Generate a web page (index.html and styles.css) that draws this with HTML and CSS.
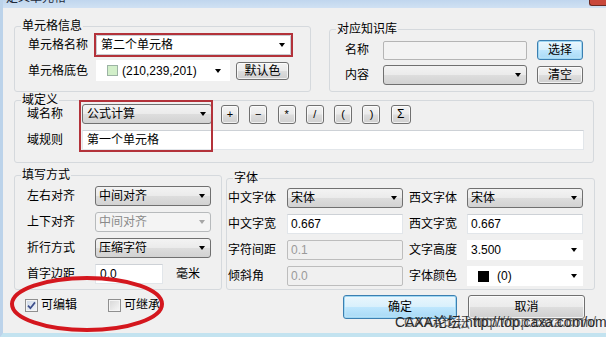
FILE: index.html
```html
<!DOCTYPE html>
<html lang="zh-CN">
<head>
    <meta charset="UTF-8">
    <meta name="viewport" content="width=device-width, initial-scale=1.0">
    <title>定义单元格</title>
    <link rel="stylesheet" href="styles.css">
</head>
<body>
    <div class="dialog">
        <div class="titlebar">
            <span class="title">定义单元格</span>
            <span class="close"></span>
        </div>

        <div class="client">
            <div class="top-row">
                <div class="group g-cell">
                    <div class="group-title">单元格信息</div>
                    <div class="row r-name">
                        <span class="label">单元格名称</span>
                        <div class="combo edit w-name">第二个单元格<i class="arrow"></i></div>
                    </div>
                    <div class="row r-color">
                        <span class="label">单元格底色</span>
                        <div class="combo flat w-color"><i class="swatch"></i>(210,239,201)<i class="arrow"></i></div>
                        <button class="btn b-defcolor">默认色</button>
                    </div>
                </div>

                <div class="group g-kb">
                    <div class="group-title">对应知识库</div>
                    <div class="rows">
                        <div class="row">
                            <span class="label">名称</span>
                            <div class="input kb"></div>
                            <button class="btn default b-side">选择</button>
                        </div>
                        <div class="row">
                            <span class="label">内容</span>
                            <div class="combo kb"><i class="arrow"></i></div>
                            <button class="btn b-side b-clear">清空</button>
                        </div>
                    </div>
                </div>
            </div>

            <div class="group g-field">
                <div class="group-title">域定义</div>
                <div class="rows">
                    <div class="row">
                        <span class="label">域名称</span>
                        <div class="combo w-formula">公式计算<i class="arrow"></i></div>
                        <div class="ops">
                            <button class="btn op">+</button>
                            <button class="btn op">−</button>
                            <button class="btn op">*</button>
                            <button class="btn op">/</button>
                            <button class="btn op">(</button>
                            <button class="btn op">)</button>
                            <button class="btn op sigma">Σ</button>
                        </div>
                    </div>
                    <div class="row">
                        <span class="label">域规则</span>
                        <div class="input w-rule">第一个单元格</div>
                    </div>
                </div>
            </div>

            <div class="mid-row">
                <div class="group g-fill">
                    <div class="group-title">填写方式</div>
                    <div class="rows">
                        <div class="row">
                            <span class="label">左右对齐</span>
                            <div class="combo w-align">中间对齐<i class="arrow"></i></div>
                        </div>
                        <div class="row">
                            <span class="label">上下对齐</span>
                            <div class="combo disabled w-align">中间对齐<i class="arrow"></i></div>
                        </div>
                        <div class="row">
                            <span class="label">折行方式</span>
                            <div class="combo w-align">压缩字符<i class="arrow"></i></div>
                        </div>
                        <div class="row r-margin">
                            <span class="label">首字边距</span>
                            <div class="input w-margin">0.0</div>
                            <span class="unit">毫米</span>
                        </div>
                    </div>
                </div>

                <div class="group g-font">
                    <div class="group-title">字体</div>
                    <div class="rows">
                        <div class="row">
                            <span class="label">中文字体</span>
                            <div class="combo w-font">宋体<i class="arrow"></i></div>
                            <span class="label label2">西文字体</span>
                            <div class="combo w-font">宋体<i class="arrow"></i></div>
                        </div>
                        <div class="row">
                            <span class="label">中文字宽</span>
                            <div class="input w-font">0.667</div>
                            <span class="label label2">西文字宽</span>
                            <div class="input w-font">0.667</div>
                        </div>
                        <div class="row">
                            <span class="label">字符间距</span>
                            <div class="input disabled w-font">0.1</div>
                            <span class="label label2">文字高度</span>
                            <div class="combo flat w-font">3.500<i class="arrow"></i></div>
                        </div>
                        <div class="row">
                            <span class="label">倾斜角</span>
                            <div class="input disabled w-font">0.0</div>
                            <span class="label label2">字体颜色</span>
                            <div class="combo flat w-font"><i class="swatch black"></i>(0)<i class="arrow"></i></div>
                        </div>
                    </div>
                </div>
            </div>

            <div class="footer">
                <div class="checks">
                    <label class="check-item">
                        <span class="cbox checked">
                            <svg width="9" height="9" viewBox="0 0 9 9"><path d="M1 4.6 L3.4 7.2 L8 1.4" fill="none" stroke="#3e4f8c" stroke-width="1.7"/></svg>
                        </span>
                        可编辑
                    </label>
                    <label class="check-item second">
                        <span class="cbox"></span>
                        可继承
                    </label>
                </div>
                <button class="btn default btn-ok">确定</button>
                <button class="btn btn-cancel">取消</button>
            </div>

            <!-- red annotations drawn over the dialog -->
            <div class="mark mark-name"></div>
            <div class="mark mark-field"></div>
            <svg class="ring" width="160" height="60" viewBox="0 0 160 60">
                <ellipse cx="80" cy="30" rx="75" ry="26" fill="none" stroke="#d4171e" stroke-width="4"/>
            </svg>
            <div class="watermark">
                <span>CAXA论坛:http://top.caxa.com/om</span>
                <span class="shift">CAXA论坛 http://top.caxa.com/</span>
            </div>
        </div>
    </div>
</body>
</html>
```

FILE: styles.css
```css
* {
    box-sizing: border-box;
}
body {
    margin: 0;
    width: 606px;
    height: 337px;
    overflow: hidden;
    font-family: "Liberation Sans", "Noto Sans CJK SC", sans-serif;
    font-size: 12px;
    line-height: 14px;
    color: #000;
    background: #c9ddf1;
}
.dialog {
    border-left: 3px solid #bcd3ea;
    border-bottom: 4px solid #c3e3f0;
}
.titlebar {
    height: 8px;
    display: flex;
    overflow: hidden;
    background: linear-gradient(#c0d6ee, #d0e1f3);
}
.title {
    margin-top: -9px;
    padding-left: 3px;
    color: #1e2a3a;
}
.close {
    margin-left: auto;
    width: 17px;
    height: 6px;
    background: #c9483b;
    border: 1px solid #6a2a22;
    border-top: none;
    border-right: none;
    border-radius: 0 0 0 3px;
}
.client {
    position: relative;
    height: 325px;
    background: #f0f0f0;
    padding-top: 18px;
}

/* group boxes */
.group {
    border: 1px solid #d5d9dd;
    border-radius: 3px;
}
.group-title {
    display: table;
    margin: -8px 0 0 6px;
    padding: 0 1px;
    background: #f0f0f0;
}
.row {
    display: flex;
    align-items: center;
    white-space: nowrap;
}
.label {
    flex: none;
}

/* controls */
.combo {
    display: flex;
    align-items: center;
    height: 20px;
    padding-left: 4px;
    border: 1px solid #707070;
    border-radius: 3px;
    background: linear-gradient(#f3f3f3 0%, #ebebeb 48%, #dddddd 52%, #d2d2d2 100%);
    white-space: nowrap;
}
.combo.edit {
    background: #fff;
    border-color: #c9ccd2;
    border-radius: 1px;
}
.combo.flat {
    background: #fff;
    border-color: #fff;
    border-radius: 0;
}
.combo.disabled {
    background: #f4f4f4;
    border-color: #b7babc;
    color: #8a8a8a;
}
.arrow {
    margin-left: auto;
    margin-right: 5px;
    width: 0;
    height: 0;
    border-left: 3.5px solid transparent;
    border-right: 3.5px solid transparent;
    border-top: 4px solid #000;
}
.combo.disabled .arrow {
    border-top-color: #a6a6a6;
}
.input {
    display: flex;
    align-items: center;
    height: 20px;
    padding-left: 4px;
    background: #fff;
    border: 1px solid #e2e6ea;
    border-top-color: #cdd1d6;
    white-space: nowrap;
}
.input.disabled {
    background: #f0f0f0;
    border: 1px solid #bdbdbd;
    border-radius: 2px;
    color: #9a9a9a;
}
.swatch {
    width: 11px;
    height: 11px;
    margin: 0 4px 0 10px;
    background: #d2efc9;
    border: 1px solid #9cb3a4;
}
.swatch.black {
    margin: 0 8px 0 7px;
    background: #000;
    border-color: #000;
}
.btn {
    font: inherit;
    color: #000;
    padding: 0;
    border: 1px solid #707070;
    border-radius: 3px;
    background: linear-gradient(#f3f3f3 0%, #ebebeb 48%, #dddddd 52%, #cfcfcf 100%);
    box-shadow: inset 0 0 0 1px rgba(255, 255, 255, 0.7);
}
.btn.default {
    border-color: #3c7fb1;
    background: linear-gradient(#eaf6fd 0%, #d9f0fc 48%, #bee6fd 52%, #a7d9f5 100%);
    box-shadow: inset 0 0 0 1px #9fd7f3, inset 0 0 3px #fff;
}

/* top row */
.top-row {
    display: flex;
    align-items: flex-start;
    padding-left: 11px;
}
.g-cell {
    width: 297px;
    height: 66px;
}
.g-cell .row {
    padding-left: 13px;
}
.g-cell .label {
    width: 68px;
}
.r-name {
    height: 24px;
}
.r-color {
    height: 21px;
    margin-top: 3px;
}
.w-name {
    width: 195px;
}
.w-color {
    width: 134px;
    height: 21px;
    padding-left: 0;
}
.w-color .arrow {
    margin-right: 8px;
}
.b-defcolor {
    width: 53px;
    height: 18px;
    margin-left: 6px;
}
.g-kb {
    width: 266px;
    height: 63px;
    margin: 3px 0 0 18px;
}
.g-kb .rows {
    padding: 4px 0 0 15px;
}
.g-kb .row {
    height: 20px;
}
.g-kb .row + .row {
    margin-top: 5px;
}
.g-kb .label {
    width: 38px;
}
.kb {
    width: 144px;
}
.input.kb {
    height: 19px;
    background: #f3f3f3;
    border: 1px solid #b5b5b5;
    border-radius: 2px;
}
.b-side {
    width: 46px;
    height: 20px;
    margin-left: 10px;
}
.b-clear {
    height: 18px;
}

/* field definition */
.g-field {
    width: 580px;
    height: 63px;
    margin: 8px 0 0 11px;
}
.g-field .rows {
    margin-top: -3px;
    padding-left: 12px;
}
.g-field .row {
    height: 20px;
}
.g-field .row + .row {
    margin-top: 6px;
}
.g-field .label {
    width: 55px;
}
.w-formula {
    width: 130px;
}
.ops {
    display: flex;
    gap: 10.3px;
    margin-left: 9px;
}
.op {
    width: 18px;
    height: 19px;
    font-size: 11px;
    line-height: 1;
}
.op.sigma {
    width: 20px;
    font-size: 12px;
}
.w-rule {
    width: 502px;
}

/* fill mode + font */
.mid-row {
    display: flex;
    align-items: flex-start;
    padding-left: 11px;
    margin-top: 12px;
}
.g-fill {
    width: 208px;
    height: 115px;
}
.g-fill .rows {
    padding: 4px 0 0 12px;
}
.g-fill .row,
.g-font .row {
    height: 20px;
    margin-bottom: 6px;
}
.g-fill .label {
    width: 68px;
}
.w-align {
    width: 116px;
    padding-left: 3px;
}
.r-margin {
    margin-top: 2px;
}
.w-margin {
    width: 68px;
}
.unit {
    margin-left: 13px;
}
.g-font {
    width: 369px;
    height: 112px;
    margin: 3px 0 0 4px;
}
.g-font .rows {
    padding: 3px 0 0 1px;
}
.g-font .label {
    width: 59px;
}
.g-font .label2 {
    width: 58px;
    margin-left: 6px;
}
.w-font {
    width: 116px;
    padding-left: 3px;
}

/* bottom */
.footer {
    display: flex;
    align-items: flex-start;
    margin-top: 5px;
    padding-left: 22px;
}
.checks {
    width: 318px;
    display: flex;
    align-items: center;
    margin-top: 3px;
}
.check-item {
    display: flex;
    align-items: center;
    gap: 3px;
}
.check-item.second {
    margin-left: 31px;
}
.cbox {
    display: flex;
    align-items: center;
    justify-content: center;
    width: 13px;
    height: 13px;
    border: 1px solid #8f8f8f;
    background: linear-gradient(135deg, #d6d6d6, #f8f8f8);
    box-shadow: inset 0 0 0 1px #f4f4f4;
}
.cbox.checked {
    background: linear-gradient(135deg, #cdd8e6, #f2f5fa);
}
.btn-ok {
    width: 114px;
    height: 24px;
}
.btn-cancel {
    width: 117px;
    height: 24px;
    margin-left: 11px;
}

/* annotations */
.mark {
    position: absolute;
    border: 2px solid #b3323a;
}
.mark-name {
    left: 91px;
    top: 25px;
    width: 199px;
    height: 24px;
}
.mark-field {
    left: 76px;
    top: 92px;
    width: 134px;
    height: 52px;
}
.ring {
    position: absolute;
    left: 4px;
    top: 266px;
}
.watermark {
    position: absolute;
    left: 392px;
    top: 306px;
    font-size: 14px;
    line-height: 16px;
    color: #2a2a2a;
    white-space: nowrap;
}
.watermark .shift {
    position: absolute;
    left: 9px;
    top: 0;
    color: rgba(40, 40, 40, 0.7);
}
```
